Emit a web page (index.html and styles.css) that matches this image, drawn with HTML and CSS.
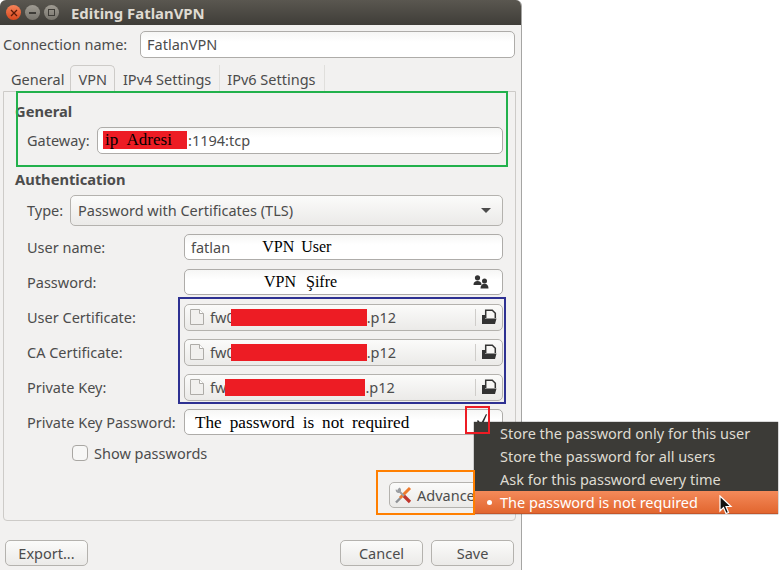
FILE: index.html
```html
<!DOCTYPE html>
<html lang="en">
<head>
    <meta charset="UTF-8">
    <meta name="viewport" content="width=device-width, initial-scale=1.0">
    <title>Editing FatlanVPN</title>
    <link rel="stylesheet" href="styles.css">
</head>
<body>
    <div class="window">
        <header class="titlebar">
            <div class="win-buttons">
                <span class="win-btn win-close">
                    <svg width="8" height="8" viewBox="0 0 8 8"><path d="M1 1l6 6M7 1l-6 6" stroke="#5a1a08" stroke-width="1.3"/></svg>
                </span>
                <span class="win-btn"><span class="win-min"></span></span>
                <span class="win-btn"><span class="win-max"></span></span>
            </div>
            <span class="win-title">Editing FatlanVPN</span>
        </header>

        <div class="name-row odd-row">
            <label class="name-label">Connection name:</label>
            <div class="entry name-entry">FatlanVPN</div>
        </div>

        <nav class="tabs">
            <span class="tab tab-first">General</span>
            <span class="tab tab-active">VPN</span>
            <span class="tab tab-sep">IPv4 Settings</span>
            <span class="tab tab-sep">IPv6 Settings</span>
        </nav>

        <section class="panel">
            <h2 class="section-title">General</h2>
            <div class="row row-gateway odd-row">
                <label class="row-label label-gateway">Gateway:</label>
                <div class="entry grow">
                    <span class="mark-ip">ip Adresi</span><span>:1194:tcp</span>
                </div>
            </div>

            <h2 class="section-title title-auth">Authentication</h2>
            <div class="row row-type odd-row">
                <label class="row-label label-type">Type:</label>
                <div class="button combo grow">
                    <span>Password with Certificates (TLS)</span>
                    <span class="arrow"></span>
                </div>
            </div>
            <div class="row row-user">
                <label class="row-label">User name:</label>
                <div class="entry grow">
                    <span>fatlan</span><span class="note note-user">VPN User</span>
                </div>
            </div>
            <div class="row row-pass">
                <label class="row-label">Password:</label>
                <div class="entry grow">
                    <span class="note note-pass">VPN Şifre</span>
                    <svg class="users-icon" width="16" height="14" viewBox="0 0 16 14">
                        <circle cx="4.500" cy="2.800" r="2.600" fill="#333"/>
                        <path d="M0.500 10c0-3 1.500-4 4-4s4 1 4 4z" fill="#333"/>
                        <circle cx="11.500" cy="6" r="2.500" fill="#333"/>
                        <path d="M7.500 13.500c0-3 1.500-4.800 4-4.800s4 1.800 4 4.800z" fill="#333"/>
                    </svg>
                </div>
            </div>

            <div class="row row-file odd-row">
                <label class="row-label">User Certificate:</label>
                <div class="button file-button grow">
                    <svg class="file-icon" width="14" height="16" viewBox="0 0 14 16"><path d="M.5.500h9l4 4v11H.5z" fill="#f1f0ee" stroke="#aeaca8"/><path d="M9.500.500v4h4" fill="#fff" stroke="#aeaca8"/></svg>
                    <span class="file-name">fw0<span class="mark-cert"></span>.p12</span>
                    <span class="file-sep"></span>
                    <svg class="folder-icon" width="16" height="16" viewBox="0 0 16 16"><path d="M4.700 9V1.200h6.600l3 3V9" fill="#f8f7f5" stroke="#333" stroke-width="1.500"/><path d="M1 15V6h3v3.500h11.500L14 15z" fill="#333"/></svg>
                </div>
            </div>
            <div class="row row-file odd-row">
                <label class="row-label">CA Certificate:</label>
                <div class="button file-button grow">
                    <svg class="file-icon" width="14" height="16" viewBox="0 0 14 16"><path d="M.5.500h9l4 4v11H.5z" fill="#f1f0ee" stroke="#aeaca8"/><path d="M9.500.500v4h4" fill="#fff" stroke="#aeaca8"/></svg>
                    <span class="file-name">fw0<span class="mark-cert"></span>.p12</span>
                    <span class="file-sep"></span>
                    <svg class="folder-icon" width="16" height="16" viewBox="0 0 16 16"><path d="M4.700 9V1.200h6.600l3 3V9" fill="#f8f7f5" stroke="#333" stroke-width="1.500"/><path d="M1 15V6h3v3.500h11.500L14 15z" fill="#333"/></svg>
                </div>
            </div>
            <div class="row row-file odd-row">
                <label class="row-label">Private Key:</label>
                <div class="button file-button grow">
                    <svg class="file-icon" width="14" height="16" viewBox="0 0 14 16"><path d="M.5.500h9l4 4v11H.5z" fill="#f1f0ee" stroke="#aeaca8"/><path d="M9.500.500v4h4" fill="#fff" stroke="#aeaca8"/></svg>
                    <span class="file-name">fw<span class="mark-cert mark-wide"></span>.p12</span>
                    <span class="file-sep"></span>
                    <svg class="folder-icon" width="16" height="16" viewBox="0 0 16 16"><path d="M4.700 9V1.200h6.600l3 3V9" fill="#f8f7f5" stroke="#333" stroke-width="1.500"/><path d="M1 15V6h3v3.500h11.500L14 15z" fill="#333"/></svg>
                </div>
            </div>
            <div class="row row-keypass">
                <label class="row-label">Private Key Password:</label>
                <div class="entry grow">
                    <span class="note note-key">The password is not required</span>
                    <svg class="tick-icon" width="12" height="12" viewBox="0 0 12 12"><path d="M2 6l3 3.500L10 0l1 .500L6 12H4L1 7z" fill="#2a2a2a"/></svg>
                </div>
            </div>

            <div class="check-row">
                <span class="checkbox"></span>
                <span>Show passwords</span>
            </div>

            <div class="advanced-row">
                <div class="button advanced-button">
                    <svg width="18" height="18" viewBox="0 0 18 18">
                        <path d="M6.500 12L2 16.500" stroke="#8f9296" stroke-width="2.400"/>
                        <path d="M16 2L6 12" stroke="#ee7a2c" stroke-width="3"/>
                        <path d="M4 4l6.500 6.500" stroke="#9b9ea2" stroke-width="2"/>
                        <path d="M10 10l6 6" stroke="#c0362c" stroke-width="3.200"/>
                        <path d="M5.500 1.500L3.500 3.500 4.500 5 1.800 3.200A3 3 0 0 0 5 7L7 5A3 3 0 0 0 5.500 1.500z" fill="#9b9ea2"/>
                    </svg>
                    <span>Advanced...</span>
                </div>
            </div>
        </section>

        <footer class="footer">
            <div class="button foot-button">Export...</div>
            <div class="foot-right">
                <div class="button foot-button">Cancel</div>
                <div class="button foot-button">Save</div>
            </div>
        </footer>
    </div>

    <ul class="menu">
        <li class="menu-item">Store the password only for this user</li>
        <li class="menu-item">Store the password for all users</li>
        <li class="menu-item">Ask for this password every time</li>
        <li class="menu-item menu-selected">The password is not required</li>
    </ul>

    <svg class="cursor" width="14" height="20" viewBox="0 0 14 20"><path d="M1 1v15l3.500-3.500 2.500 6 2.500-1-2.500-6h5z" fill="#111" stroke="#fff" stroke-width="1.200"/></svg>

    <div class="callout callout-green"></div>
    <div class="callout callout-navy"></div>
    <div class="callout callout-red"></div>
    <div class="callout callout-orange"></div>
</body>
</html>
```

FILE: styles.css
```css
html, body {
    margin: 0;
    padding: 0;
    background-color: #fff;
}
body {
    position: relative;
    width: 779px;
    height: 570px;
    overflow: hidden;
    font-family: "Noto Sans", "Open Sans", sans-serif;
    font-size: 14.5px;
    line-height: 18px;
    color: #4c4c4c;
}
.window {
    width: 521px;
    height: 570px;
    background-color: #f2f1f0;
    border-right: 1px solid #a5a5a3;
    border-radius: 6px 6px 0 0;
    overflow: hidden;
}
.titlebar {
    display: flex;
    align-items: center;
    height: 25px;
    background: linear-gradient(#5a5750, #3f3d38);
}
.win-buttons {
    display: flex;
    gap: 4px;
    margin-left: 6px;
}
.win-btn {
    display: flex;
    align-items: center;
    justify-content: center;
    width: 15px;
    height: 15px;
    border-radius: 50%;
    background: linear-gradient(#a09c93, #77746c);
}
.win-close {
    background: linear-gradient(#f5845a, #d9471c);
}
.win-min {
    width: 7px;
    height: 2px;
    background-color: #3e3c37;
}
.win-max {
    width: 5px;
    height: 5px;
    border: 1px solid #3e3c37;
}
.win-title {
    margin-left: 12px;
    font-size: 14.9px;
    font-weight: bold;
    color: #dfdbd2;
}

.name-row {
    display: flex;
    align-items: center;
    height: 27px;
    margin: 6px 6px 0 3px;
}
.name-label {
    width: 137px;
}
.name-entry {
    flex: 1;
}
.entry {
    display: flex;
    align-items: center;
    box-sizing: border-box;
    height: 100%;
    padding: 0 6px;
    background: linear-gradient(#f6f6f5, #fff 40%);
    border: 1px solid #aeaca9;
    border-radius: 5px;
    color: #4c4c4c;
}
.grow {
    flex: 1;
}
.button {
    display: flex;
    align-items: center;
    box-sizing: border-box;
    background: linear-gradient(#fbfbfa, #ebeae8);
    border: 1px solid #b4b2ae;
    border-radius: 5px;
}
/* text sits a pixel high in the odd-height rows */
.odd-row label,
.odd-row .entry,
.odd-row .button {
    padding-bottom: 1px;
}

.tabs {
    display: flex;
    height: 26px;
    margin: 7px 0 0 3px;
}
.tab {
    display: flex;
    align-items: center;
    box-sizing: border-box;
    padding: 2px 8px 0 7px;
}
.tab-first {
    padding: 2px 6px 0 8px;
}
.tab-active {
    margin: 0 1px 0 0;
    padding: 0 7px;
    background-color: #f2f1f0;
    border: 1px solid #cdcbc8;
    border-bottom: none;
    border-radius: 5px 5px 0 0;
}
.tab-sep {
    border-right: 1px solid #e0dfdc;
}

.panel {
    box-sizing: border-box;
    height: 430px;
    margin: 0 5px 0 3px;
    padding: 10px 12px 0 11px;
    border: 1px solid #cdcbc8;
    border-radius: 0 0 4px 4px;
}
.section-title {
    margin: 0;
    padding-bottom: 2px;
    font-size: 14.7px;
    line-height: 18px;
    color: #4c4c4c;
}
.title-auth {
    margin-top: 16px;
}
.row {
    display: flex;
    align-items: center;
    padding-left: 12px;
}
.row-label {
    flex: none;
    width: 157px;
}
.label-gateway {
    width: 70px;
}
.label-type {
    width: 43px;
}
.row-gateway {
    height: 27px;
    margin-top: 5px;
}
.row-type {
    height: 31px;
    margin-top: 5px;
}
.row-user {
    height: 26px;
    margin-top: 8px;
}
.row-pass {
    height: 26px;
    margin-top: 9px;
}
.row-file {
    height: 27px;
    margin-top: 8px;
}
.row-pass + .row-file {
    margin-top: 9px;
}
.row-keypass {
    height: 26px;
    margin-top: 8px;
}

.combo {
    justify-content: space-between;
    height: 100%;
    padding: 0 11px 0 7px;
}
.arrow {
    width: 0;
    height: 0;
    border-left: 5px solid transparent;
    border-right: 5px solid transparent;
    border-top: 5px solid #4c4c4c;
}

.mark-ip {
    width: 84px;
    height: 18px;
    margin: 0 1px 0 -1px;
    line-height: 17px;
    background-color: #ed1c24;
    color: #000;
    font-family: "Liberation Serif", serif;
    font-size: 17px;
    word-spacing: 5px;
    text-indent: 2px;
}
.note {
    font-family: "Liberation Serif", serif;
    font-size: 16px;
    color: #000;
    word-spacing: 3px;
}
.note-user {
    margin-left: 32px;
}
.note-pass {
    margin-left: 73px;
    word-spacing: 6px;
}
.note-key {
    margin-left: 4px;
    padding-top: 2px;
    font-size: 17.2px;
    word-spacing: 3.700px;
}
.users-icon {
    margin-left: auto;
    margin-right: 7px;
}
.tick-icon {
    margin-left: auto;
    margin-right: 8px;
    margin-top: -5px;
}

.file-button {
    height: 100%;
    padding: 0 5px;
}
.file-icon {
    flex: none;
}
.file-name {
    display: flex;
    align-items: center;
    margin-left: 6px;
}
.mark-cert {
    width: 136px;
    height: 17px;
    margin-left: -4px;
    background-color: #ed1c24;
}
.mark-wide {
    width: 140px;
    margin-left: -1px;
}
.file-sep {
    width: 1px;
    height: 17px;
    margin-left: auto;
    background-color: #cfcdca;
}
.folder-icon {
    margin-left: 5px;
}

.check-row {
    display: flex;
    align-items: center;
    gap: 6px;
    height: 16px;
    margin: 10px 0 0 57px;
}
.checkbox {
    box-sizing: border-box;
    width: 16px;
    height: 16px;
    background-color: #f7f7f6;
    border: 1px solid #a9a7a3;
    border-radius: 4px;
}
.advanced-row {
    display: flex;
    justify-content: flex-end;
    margin-top: 21px;
}
.advanced-button {
    gap: 5px;
    width: 114px;
    height: 26px;
    padding-left: 4px;
}

.footer {
    display: flex;
    justify-content: space-between;
    margin: 19px 7px 0 5px;
}
.foot-right {
    display: flex;
    gap: 8px;
}
.foot-button {
    justify-content: center;
    width: 83px;
    height: 26px;
}

.menu {
    position: absolute;
    left: 474px;
    top: 422px;
    width: 304px;
    margin: 0;
    padding: 0;
    list-style: none;
    background-color: #3c3b37;
    box-shadow: 0 0 1px #222;
    color: #dfdbd2;
}
.menu-item {
    height: 23px;
    line-height: 22px;
    padding-left: 26px;
}
.menu-selected {
    position: relative;
    box-sizing: border-box;
    background: linear-gradient(#f48a5a, #e2662f);
    border-bottom: 1px solid #c4552a;
    color: #fff;
}
.menu-selected::before {
    content: "";
    position: absolute;
    left: 13px;
    top: 9px;
    width: 5px;
    height: 5px;
    border-radius: 50%;
    background-color: #fff;
}
.cursor {
    position: absolute;
    left: 719px;
    top: 495px;
}

.callout {
    position: absolute;
    box-sizing: border-box;
    border: 2px solid;
}
.callout-green {
    left: 16px;
    top: 91px;
    width: 492px;
    height: 76px;
    border-color: #22b14c;
}
.callout-navy {
    left: 178px;
    top: 297px;
    width: 328px;
    height: 107px;
    border-color: #2e3192;
}
.callout-red {
    left: 465px;
    top: 406px;
    width: 25px;
    height: 28px;
    border-color: #ed1c24;
}
.callout-orange {
    left: 376px;
    top: 470px;
    width: 99px;
    height: 45px;
    border-color: #ff7f00;
}
```
